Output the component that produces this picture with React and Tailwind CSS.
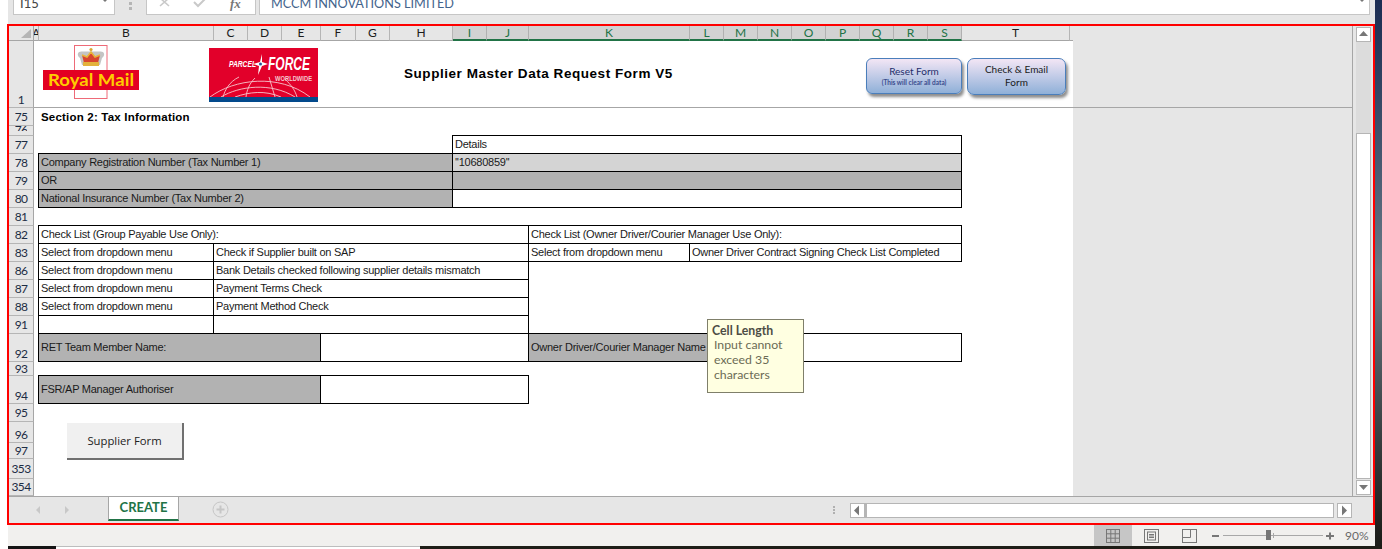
import React from "react";
import clsx from "clsx";

const colHeaders = [
  ["A", "col-start-2", false], ["B", "col-start-3", false], ["C", "col-start-4", false], ["D", "col-start-5", false],
  ["E", "col-start-6", false], ["F", "col-start-7", false], ["G", "col-start-8", false], ["H", "col-start-9", false],
  ["I", "col-start-10", true], ["J", "col-start-11", true], ["K", "col-start-12", true], ["L", "col-start-13", true],
  ["M", "col-start-14", true], ["N", "col-start-15", true], ["O", "col-start-16", true], ["P", "col-start-17", true],
  ["Q", "col-start-18", true], ["R", "col-start-19", true], ["S", "col-start-20", true], ["T", "col-start-21", false],
];

const rowHeaders = [
  ["1", "row-start-2 items-end"], ["75", "row-start-3 items-center"], ["76", "row-start-4 items-start"], ["77", "row-start-5 items-center"],
  ["78", "row-start-6 items-center"], ["79", "row-start-7 items-center"], ["80", "row-start-8 items-center"], ["81", "row-start-9 items-center"],
  ["82", "row-start-10 items-center"], ["83", "row-start-11 items-center"], ["86", "row-start-12 items-center"], ["87", "row-start-13 items-center"],
  ["88", "row-start-14 items-center"], ["91", "row-start-15 items-center"], ["92", "row-start-16 items-end"], ["93", "row-start-17 items-center"],
  ["94", "row-start-18 items-end"], ["95", "row-start-19 items-center"], ["96", "row-start-20 items-end"], ["97", "row-start-21 items-center"],
  ["353", "row-start-22 items-center"], ["354", "row-start-23 items-center"],
];

function Cell({ className, children }) {
  return (
    <div className={clsx("-ml-px -mt-px border border-black flex items-center pl-[2px] whitespace-nowrap overflow-hidden text-[11px] tracking-[-0.25px] leading-none text-[#1a1a1a]", className)}>
      {children}
    </div>
  );
}

function RoyalMail() {
  return (
    <svg width="97" height="56" viewBox="0 0 97 56" className="block">
      <rect x="31.5" y="0.5" width="32.5" height="53" fill="#fff" stroke="#ee6a78" />
      <path d="M37 13 C33 10 35 6 39 6.5 L57 6.5 C61 6 63 10 59 13 L57 20 L39 20 Z" fill="#c4c4c4" />
      <path d="M41 18 L39 10 L44 12 L48 7 L52 12 L57 10 L55 18 Z" fill="#d8452f" />
      <path d="M39 10 L44 12 L48 7 L52 12 L57 10" stroke="#e8b33a" strokeWidth="1.5" fill="none" />
      <path d="M40 17 H56 V21 H40 Z" fill="#e3b23c" />
      <circle cx="48" cy="4.5" r="1.6" fill="#d9a531" />
      <rect x="0" y="25" width="96" height="20" fill="#e30022" />
      <text x="5" y="41" fontFamily="Lato, 'Liberation Sans', sans-serif" fontWeight="700" fontSize="17" fill="#ffcc00" textLength="86" lengthAdjust="spacingAndGlyphs">Royal Mail</text>
    </svg>
  );
}

function ParcelForce() {
  return (
    <svg width="109" height="54" viewBox="0 0 109 54" className="block">
      <rect width="109" height="54" fill="#e2002a" />
      <g stroke="#f6c6cd" strokeWidth="0.9" fill="none">
        <path d="M1 49 C25 31 70 25 101 49" />
        <path d="M12 49 C30 38 62 34 86 49" />
        <path d="M26 49 C40 44 56 42 72 49" />
        <path d="M30 29 C20 34 16 42 14 49" />
        <path d="M46 30 C40 36 38 42 37 49" />
        <path d="M60 29 C62 36 64 42 66 49" />
        <path d="M76 31 C82 37 86 42 88 49" />
      </g>
      <rect y="49" width="109" height="5" fill="#034a8c" />
      <text x="20" y="19" fontFamily="'Liberation Sans', sans-serif" fontStyle="italic" fontWeight="700" fontSize="9" fill="#fff" textLength="27" lengthAdjust="spacingAndGlyphs">PARCEL</text>
      <path d="M53 6 L53 14 L59 16 L53 18 L49 27 L50 18 L44 16 L51 14 Z" fill="#fff" />
      <circle cx="51.5" cy="16" r="1.5" fill="#2a4f9a" />
      <text x="59" y="22" fontFamily="'Liberation Sans', sans-serif" fontStyle="italic" fontWeight="700" fontSize="19" fill="#fff" textLength="42" lengthAdjust="spacingAndGlyphs">FORCE</text>
      <text x="66" y="33" fontFamily="'Liberation Sans', sans-serif" fontWeight="700" fontSize="6.5" fill="#f5c7cf" textLength="37" lengthAdjust="spacingAndGlyphs">WORLDWIDE</text>
    </svg>
  );
}

function ScrollButton({ dir, className }) {
  const pts = { up: "3,9 12,9 7.5,4", down: "3,5 12,5 7.5,10", left: "9,2.5 9,12.5 4,7.5", right: "5,2.5 5,12.5 10,7.5" }[dir];
  return (
    <div className={clsx("w-[15px] h-[15px] bg-white border border-[#b5b5b5] flex items-center justify-center shrink-0", className)}>
      <svg width="15" height="15" viewBox="0 0 15 15" className="shrink-0"><polygon points={pts} fill="#777" /></svg>
    </div>
  );
}

function StatusBar() {
  return (
    <div className="ml-px h-[21px] bg-[#f1f0ee] flex items-center text-[#6a6a6a]">
      <div className="w-[1086px] shrink-0" />
      <div className="w-[38px] h-full bg-[#c6c6c6] flex items-center justify-center">
        <svg width="14" height="14" viewBox="0 0 14 14" fill="none" stroke="#777"><rect x="0.5" y="0.5" width="13" height="13" /><path d="M4.8 0V14M9.2 0V14M0 4.8H14M0 9.2H14" /></svg>
      </div>
      <div className="w-[38px] h-full flex items-center justify-center">
        <svg width="15" height="14" viewBox="0 0 15 14" fill="none" stroke="#777"><rect x="0.5" y="0.5" width="14" height="13" /><rect x="3.5" y="3" width="8" height="8" /><path d="M5 5.5H10M5 7H10M5 8.5H10" /></svg>
      </div>
      <div className="w-[38px] h-full flex items-center justify-center">
        <svg width="15" height="14" viewBox="0 0 15 14" fill="none" stroke="#777"><rect x="0.5" y="0.5" width="14" height="13" /><path d="M0 8.5H8.5V0" /></svg>
      </div>
      <svg width="12" height="12" viewBox="0 0 12 12" className="ml-[2px]"><rect x="2" y="5" width="7" height="2" fill="#777" /></svg>
      <div className="relative w-[100px] h-px bg-[#a8a8a8] ml-[1px]">
        <div className="absolute left-[43px] -top-[5px] w-[5px] h-[10px] bg-[#777]" />
        <div className="absolute left-[50px] -top-[2px] w-px h-[5px] bg-[#a8a8a8]" />
      </div>
      <svg width="12" height="12" viewBox="0 0 12 12" className="ml-[1px]"><path d="M2 6H10M6 2.5V9.5" stroke="#777" strokeWidth="2" /></svg>
      <span className="ml-[9px] font-['Lato'] text-[12px]">90%</span>
    </div>
  );
}

function FormulaBar() {
  return (
    <div className="h-[24px] ml-px bg-[#e6e6e6] flex items-start overflow-hidden">
      <div className="ml-[5px] w-[102px] h-[15px] bg-white border-x border-b border-[#c6c6c6] flex items-end justify-between pl-[6px] pr-[4px] overflow-hidden">
        <span className="font-['Lato'] text-[13px] leading-[14px] text-[#444] mb-[4px]">I15</span>
        <svg width="10" height="8" viewBox="0 0 10 8" className="mb-[9px]"><path d="M1 1 H9 L5 5 Z" fill="#777" /></svg>
      </div>
      <div className="w-[31px] h-[14px] flex flex-col items-center gap-[2px] pt-[2px]">
        <div className="w-[3px] h-[3px] bg-[#b5b5b5]" />
        <div className="w-[3px] h-[3px] bg-[#b5b5b5]" />
      </div>
      <div className="w-[110px] h-[15px] bg-white border-x border-b border-[#c6c6c6] flex items-start overflow-hidden relative">
        <svg width="12" height="10" viewBox="0 0 12 10" className="ml-[12px] -mt-[2px]"><path d="M1 0 L10 8 M10 0 L1 8" stroke="#c9c9c9" strokeWidth="1.6" /></svg>
        <svg width="14" height="10" viewBox="0 0 14 10" className="ml-[22px] -mt-[2px]"><path d="M1 4 L5 8 L13 0" stroke="#c9c9c9" strokeWidth="2" fill="none" /></svg>
        <span className="ml-[23px] -mt-[2px] font-['Liberation_Serif'] italic text-[13px] leading-[11px] font-bold text-[#777]">fx</span>
      </div>
      <div className="ml-[3px] w-[1111px] h-[15px] bg-white border-x border-b border-[#c6c6c6] flex items-end justify-between pl-[11px] pr-[2px] overflow-hidden">
        <span className="font-['Lato'] text-[12.7px] leading-[14px] text-[#44648c] mb-[4px]">MCCM INNOVATIONS LIMITED</span>
        <svg width="10" height="8" viewBox="0 0 10 8" className="mb-[9px]"><path d="M1 1 H9 L5 5 Z" fill="#777" /></svg>
      </div>
    </div>
  );
}

function Sheet() {
  return (
    <div className="relative w-[1064px] shrink-0 bg-white grid grid-cols-[25px_5px_175px_34px_34px_39px_35px_34px_63px_34px_42px_161px_34px_34px_34px_34px_34px_34px_34px_34px_108px_3px] grid-rows-[15px_67px_18px_10px_18px_18px_18px_18px_18px_18px_18px_18px_18px_18px_18px_28px_14px_28px_18px_21px_16px_20px_17px]">
      <div className="col-start-1 row-start-1 bg-[#e6e6e6] border-r border-b border-[#a6a6a6] flex items-end justify-end pr-[2px] pb-[2px]">
        <svg width="10" height="9" viewBox="0 0 10 9"><polygon points="10,0 10,9 0,9" fill="#b5b5b5" /></svg>
      </div>
      {colHeaders.map(([label, col, sel]) => (
        <div key={label} className={clsx(col, "row-start-1 flex items-center justify-center overflow-hidden font-['Lato'] text-[12px] leading-none", sel ? "bg-[#d2d2d2] text-[#217346] border-r border-r-[#b0b0b0] border-b-2 border-b-[#217346]" : "bg-[#e6e6e6] text-[#1c1c1c] border-r border-r-[#b5b5b5] border-b border-b-[#a6a6a6]")}>
          {label}
        </div>
      ))}
      <div className="col-start-22 row-start-1 bg-[#e6e6e6] border-b border-[#a6a6a6]" />
      {rowHeaders.map(([label, row]) => (
        <div key={label} className={clsx(row, "col-start-1 flex justify-center bg-[#e6e6e6] border-r border-b border-r-[#a6a6a6] border-b-[#b5b5b5] overflow-hidden font-['Lato'] text-[12px] tracking-[-0.7px] text-[#1c2c44]")}>
          {label === "76" ? <span className="block h-[5px] overflow-hidden leading-[8px]">{label}</span> : <span className="block leading-[14px]">{label}</span>}
        </div>
      ))}

      <div className="col-start-2 col-end-23 row-start-2 border-b border-[#a6a6a6] relative flex items-start">
        <div className="ml-[9px] mt-[4px]"><RoyalMail /></div>
        <div className="ml-[69px] mt-[7px]"><ParcelForce /></div>
        <div className="ml-[86px] mt-[25px] w-[269px] font-['Liberation_Sans'] font-bold text-[13.5px] tracking-[0.55px] leading-[16px] text-black whitespace-nowrap">Supplier Master Data Request Form V5</div>
        <div className="ml-[193px] mt-[17px] w-[96px] h-[36px] rounded-[6px] border border-[#4a7ebb] bg-linear-to-b from-[#f3e6f5] to-[#8fb0d8] shadow-[2px_3px_3px_rgba(0,0,0,0.45)] flex flex-col items-center justify-center font-['Lato']">
          <span className="text-[10px] leading-[13px] text-[#1f2d6a]">Reset Form</span>
          <span className="text-[6.5px] leading-[9px] font-bold text-[#3b4d8f] whitespace-nowrap">(This will clear all data)</span>
        </div>
        <div className="ml-[5px] mt-[17px] w-[99px] h-[37px] rounded-[7px] border border-[#4a7ebb] bg-linear-to-b from-[#f3e6f5] to-[#8fb0d8] shadow-[2px_3px_3px_rgba(0,0,0,0.45)] flex flex-col items-center justify-center pb-px font-['Lato'] text-[10px] leading-[13px] text-[#1a1a1a]">
          <span>Check &amp; Email</span>
          <span>Form</span>
        </div>
      </div>

      <div className="col-start-3 col-end-12 row-start-3 flex items-center pl-[2px] pt-px font-['Liberation_Sans'] font-bold text-[11.5px] text-black whitespace-nowrap tracking-[0.2px]">Section 2: Tax Information</div>

      <div className="contents font-['Liberation_Sans']">
        <Cell className="col-start-10 col-end-21 row-start-5">Details</Cell>
        <Cell className="col-start-3 col-end-10 row-start-6 bg-[#b2b2b2]">Company Registration Number (Tax Number 1)</Cell>
        <Cell className="col-start-10 col-end-21 row-start-6 bg-[#d4d4d4]">''10680859''</Cell>
        <Cell className="col-start-3 col-end-10 row-start-7 bg-[#b2b2b2]">OR</Cell>
        <Cell className="col-start-10 col-end-21 row-start-7 bg-[#b2b2b2]" />
        <Cell className="col-start-3 col-end-10 row-start-8 bg-[#b2b2b2]">National Insurance Number (Tax Number 2)</Cell>
        <Cell className="col-start-10 col-end-21 row-start-8" />

        <Cell className="col-start-3 col-end-12 row-start-10">Check List (Group Payable Use Only):</Cell>
        <Cell className="col-start-12 col-end-21 row-start-10">Check List (Owner Driver/Courier Manager Use Only):</Cell>
        <Cell className="col-start-3 col-end-4 row-start-11">Select from dropdown menu</Cell>
        <Cell className="col-start-4 col-end-12 row-start-11">Check if Supplier built on SAP</Cell>
        <Cell className="col-start-12 col-end-13 row-start-11">Select from dropdown menu</Cell>
        <Cell className="col-start-13 col-end-21 row-start-11">Owner Driver Contract Signing Check List Completed</Cell>
        <Cell className="col-start-3 col-end-4 row-start-12">Select from dropdown menu</Cell>
        <Cell className="col-start-4 col-end-12 row-start-12">Bank Details checked following supplier details mismatch</Cell>
        <Cell className="col-start-3 col-end-4 row-start-13">Select from dropdown menu</Cell>
        <Cell className="col-start-4 col-end-12 row-start-13">Payment Terms Check</Cell>
        <Cell className="col-start-3 col-end-4 row-start-14">Select from dropdown menu</Cell>
        <Cell className="col-start-4 col-end-12 row-start-14">Payment Method Check</Cell>
        <Cell className="col-start-3 col-end-4 row-start-15" />
        <Cell className="col-start-4 col-end-12 row-start-15" />

        <Cell className="col-start-3 col-end-7 row-start-16 bg-[#b2b2b2]">RET Team Member Name:</Cell>
        <Cell className="col-start-7 col-end-12 row-start-16" />
        <Cell className="col-start-12 col-end-14 row-start-16 bg-[#b2b2b2]">Owner Driver/Courier Manager Name</Cell>
        <Cell className="col-start-14 col-end-21 row-start-16" />
        <Cell className="col-start-3 col-end-7 row-start-18 bg-[#b2b2b2]">FSR/AP Manager Authoriser</Cell>
        <Cell className="col-start-7 col-end-12 row-start-18" />
      </div>

      <div className="col-start-3 col-end-5 row-start-20 row-end-22 ml-[28px] mt-px w-[117px] h-[37px] bg-[#f0f0f0] border-r-2 border-b-2 border-[#707070] flex items-center justify-center font-['Open_Sans'] text-[11.3px] pt-px text-[#222]">Supplier Form</div>

      <div className="absolute left-[698px] top-[293px] w-[97px] h-[74px] bg-[#ffffe1] border border-[#7f7f6a] pl-[4px] pt-[4px] font-['Lato'] text-[12.3px] leading-[15px] text-[#6b6b55]">
        <div className="font-bold text-[#4d4d45] leading-[13px]">Cell Length</div>
        <div className="pl-[2px]">Input cannot</div>
        <div className="pl-[2px]">exceed 35</div>
        <div className="pl-[2px]">characters</div>
      </div>
    </div>
  );
}

export default function App() {
  return (
    <div className="w-[1382px] h-[549px] overflow-hidden flex flex-col bg-white">
      <div className="h-[546px] flex shrink-0">
        <div className="w-[7px] bg-white shrink-0" />
        <div className="w-[1368px] shrink-0 flex flex-col">
          <FormulaBar />
          <div className="h-[501px] border-2 border-[#ff0000] bg-[#e6e6e6] flex flex-col">
            <div className="h-[470px] flex">
              <Sheet />
              <div className="flex-1 flex flex-col border-r border-[#a6a6a6]">
                <div className="h-[82px] border-b border-[#a6a6a6] shrink-0" />
              </div>
              <div className="w-[20px] shrink-0 pl-[3px] pt-px flex flex-col">
                <ScrollButton dir="up" />
                <div className="h-[91px] w-[15px] bg-[#dcdcdc] shrink-0" />
                <div className="flex-1 w-[15px] bg-white border border-[#b5b5b5]" />
                <ScrollButton dir="down" className="mt-px mb-px" />
              </div>
            </div>
            <div className="h-[27px] border-t border-[#a6a6a6] flex">
              <div className="w-[99px] flex items-center shrink-0">
                <svg width="8" height="10" viewBox="0 0 8 10" className="ml-[25px]"><polygon points="6,1 6,9 2,5" fill="#c8c8c8" /></svg>
                <svg width="8" height="10" viewBox="0 0 8 10" className="ml-[21px]"><polygon points="2,1 2,9 6,5" fill="#c8c8c8" /></svg>
              </div>
              <div className="-mt-px w-[71px] h-[25px] bg-white border-x border-t border-[#a6a6a6] border-b-2 border-b-[#217346] flex items-center justify-center font-['Lato'] font-bold text-[13px] text-[#217346] shrink-0">CREATE</div>
              <div className="ml-[33px] flex items-center shrink-0 h-[25px]">
                <svg width="17" height="17" viewBox="0 0 17 17" fill="none" stroke="#c6c6c6"><circle cx="8.5" cy="8.5" r="7.5" /><path d="M8.5 4.5V12.5M4.5 8.5H12.5" strokeWidth="2" /></svg>
              </div>
              <div className="ml-[604px] flex flex-col justify-center gap-[1px] h-[25px] shrink-0">
                <div className="w-[2px] h-[2px] bg-[#b0b0b0]" />
                <div className="w-[2px] h-[2px] bg-[#b0b0b0]" />
                <div className="w-[2px] h-[2px] bg-[#b0b0b0]" />
              </div>
              <div className="ml-[15px] flex items-start pt-[6px]">
                <ScrollButton dir="left" />
                <div className="w-[469px] h-[15px] bg-white border-y border-r border-[#b5b5b5] border-l-2 border-l-[#b5b5b5]" />
                <ScrollButton dir="right" className="ml-[3px]" />
              </div>
            </div>
          </div>
          <StatusBar />
        </div>
        <div className="flex-1 bg-linear-to-b from-[#1b2c52] via-[#6a7a86] to-[#1c1c18]" />
      </div>
      <div className="h-[3px] flex shrink-0">
        <div className="w-[8px] bg-white" />
        <div className="w-[48px] bg-[#141414]" />
        <div className="w-[364px] bg-white border-t border-[#bdbdbd]" />
        <div className="flex-1 bg-[#1e1d16]" />
      </div>
    </div>
  );
}
